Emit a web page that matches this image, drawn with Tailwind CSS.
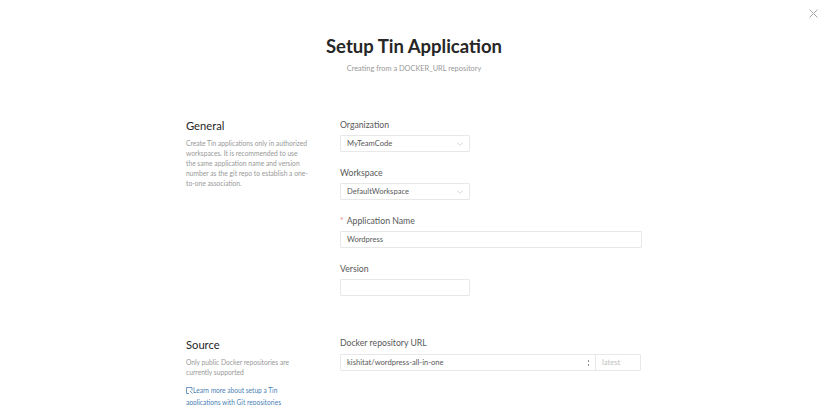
<!DOCTYPE html>
<html lang="en">
<head>
    <meta charset="UTF-8" />
    <title>Setup Tin Application</title>
    <script src="https://cdn.jsdelivr.net/npm/@tailwindcss/browser@4"></script>
</head>
<body class="bg-white font-['Lato',sans-serif] overflow-hidden h-[405px] relative">

    <!-- Close -->
    <button class="absolute left-[809px] top-[9px] text-[#a8a8a8]">
        <svg width="9" height="9" viewBox="0 0 9 9" fill="none" stroke="currentColor" stroke-width="1"><path d="M0.5 0.5L8.5 8.5M8.5 0.5L0.5 8.5"/></svg>
    </button>

    <!-- Header -->
    <header class="pt-[33px] text-center">
        <h1 class="text-[18.5px] leading-[27px] font-bold text-[#262626]">Setup Tin Application</h1>
        <p class="mt-[3px] text-[7.4px] leading-[12px] text-[#999999]">Creating from a DOCKER_URL repository</p>
    </header>

    <main class="pl-[186px]">
        <!-- General -->
        <section class="flex mt-[43px]">
            <div class="w-[154px] shrink-0">
                <h2 class="text-[11.2px] leading-[16px] text-[#262626]">General</h2>
                <p class="mt-[4px] w-[122px] text-[6.7px] leading-[10px] text-[#999999]">Create Tin applications only in authorized workspaces. It is recommended to use the same application name and version number as the git repo to establish a one-to-one association.</p>
            </div>
            <div class="flex flex-col">
                <label class="text-[8.7px] leading-[14px] text-[#595959]">Organization</label>
                <div class="mt-[3px] w-[130px] h-[17px] border border-[#e8e8e8] rounded-[1px] flex items-center justify-between px-[6px] text-[7.6px] text-[#595959]">
                    <span>MyTeamCode</span>
                    <svg width="6" height="4" viewBox="0 0 6 4" fill="none" stroke="#c4c4c4" stroke-width="0.7"><path d="M0.3 0.5L3 3.3L5.7 0.5"/></svg>
                </div>
                <label class="mt-[14px] text-[8.7px] leading-[14px] text-[#595959]">Workspace</label>
                <div class="mt-[3px] w-[130px] h-[17px] border border-[#e8e8e8] rounded-[1px] flex items-center justify-between px-[6px] text-[7.6px] text-[#595959]">
                    <span>DefaultWorkspace</span>
                    <svg width="6" height="4" viewBox="0 0 6 4" fill="none" stroke="#c4c4c4" stroke-width="0.7"><path d="M0.3 0.5L3 3.3L5.7 0.5"/></svg>
                </div>
                <label class="mt-[14px] text-[8.7px] leading-[14px] text-[#595959]"><span class="text-[#f28b82] mr-[3px]">*</span>Application Name</label>
                <div class="mt-[3px] w-[302px] h-[17px] border border-[#e8e8e8] rounded-[1px] flex items-center px-[6px] text-[7.6px] text-[#595959]">Wordpress</div>
                <label class="mt-[14px] text-[8.7px] leading-[14px] text-[#595959]">Version</label>
                <div class="mt-[3px] w-[130px] h-[17px] border border-[#e8e8e8] rounded-[1px]"></div>
            </div>
        </section>

        <!-- Source -->
        <section class="flex mt-[40px]">
            <div class="w-[154px] shrink-0 pt-[1px]">
                <h2 class="text-[11.2px] leading-[16px] text-[#262626]">Source</h2>
                <p class="mt-[4px] w-[118px] text-[6.7px] leading-[10px] text-[#999999]">Only public Docker repositories are currently supported</p>
                <a class="block mt-[7px] w-[118px] text-[6.6px] leading-[12px] text-[#4a7fb5]">
                    <svg class="inline-block align-[-1px]" width="7" height="7" viewBox="0 0 7 7" fill="none" stroke="#4a7fb5" stroke-width="0.8"><path d="M3 6.5H0.5V0.5H6V3.5M4 4L6.5 6.5"/></svg>Learn more about setup a Tin applications with Git repositories
                </a>
            </div>
            <div class="flex flex-col">
                <label class="text-[8.7px] leading-[14px] text-[#595959]">Docker repository URL</label>
                <div class="mt-[4px] w-[301px] h-[17px] border border-[#e8e8e8] rounded-[1px] flex items-stretch text-[7.6px]">
                    <div class="flex-1 flex items-center justify-between px-[6px] text-[#595959]">
                        <span>kishitat/wordpress-all-in-one</span>
                        <span class="flex flex-col gap-[2px]"><i class="block w-[1px] h-[2px] bg-[#8c8c8c]"></i><i class="block w-[1px] h-[2px] bg-[#8c8c8c]"></i></span>
                    </div>
                    <div class="w-[45px] border-l border-[#e8e8e8] flex items-center px-[6px] text-[#bfbfbf]">latest</div>
                </div>
            </div>
        </section>
    </main>
</body>
</html>
